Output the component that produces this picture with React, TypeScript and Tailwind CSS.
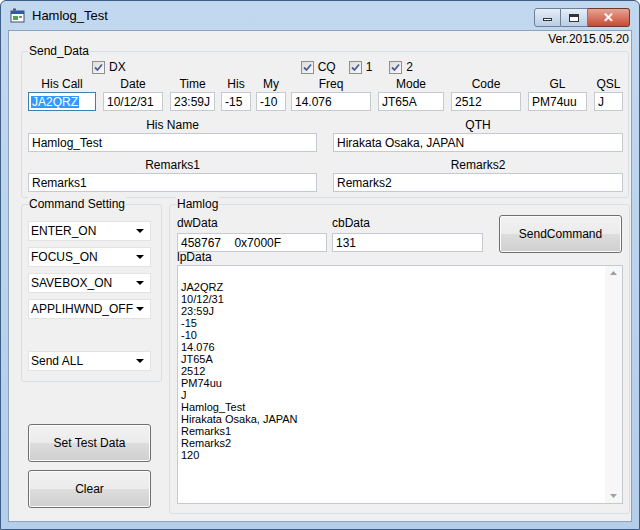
import React from "react";

const F = { fontFamily: '"Liberation Sans", Arial, sans-serif' };

function Box({ w, text, sel, cls = "" }: { w: number; text: string; sel?: boolean; cls?: string }) {
  return (
    <div
      className={`h-[19px] bg-white border flex items-center pl-[3px] text-[12px] leading-none text-black whitespace-pre overflow-hidden ${sel ? "border-[#3c7fb1]" : "border-[#c5c9d0]"} ${cls}`}
      style={{ width: w }}
    >
      {sel ? <span className="bg-[#3399ff] text-white px-[1px] -ml-[1px]">{text}</span> : text}
    </div>
  );
}

function Col({ w, label, text, ml, sel }: { w: number; label: string; text: string; ml: number; sel?: boolean }) {
  return (
    <div className="flex flex-col items-center" style={{ width: w, marginLeft: ml }}>
      <div className="h-[15px] text-[12px] leading-[15px] whitespace-nowrap">{label}</div>
      <Box w={w} text={text} sel={sel} />
    </div>
  );
}

function Check({ label }: { label: string }) {
  return (
    <div className="flex items-center gap-[4px] text-[12px]">
      <div className="w-[13px] h-[13px] border border-[#8f8f8f] bg-gradient-to-br from-[#dcdcdc] to-[#fafafa] flex items-center justify-center">
        <svg width="9" height="9" viewBox="0 0 9 9"><path d="M1 4.5 L3.5 7 L8 1.5" stroke="#4a5f97" strokeWidth="1.8" fill="none" /></svg>
      </div>
      <span>{label}</span>
    </div>
  );
}

function Combo({ text, cls = "" }: { text: string; cls?: string }) {
  return (
    <div className={`w-[123px] h-[20px] bg-white border border-[#e3e3e3] flex items-center justify-between pl-[2px] pr-[6px] text-[12px] ${cls}`}>
      <span className="whitespace-nowrap">{text}</span>
      <svg width="8" height="4" viewBox="0 0 8 4"><path d="M0 0 L8 0 L4 4 Z" fill="#000" /></svg>
    </div>
  );
}

function Btn({ text, w, h, cls = "" }: { text: string; w: number; h: number; cls?: string }) {
  return (
    <div
      className={`rounded-[3px] border border-[#707070] flex items-center justify-center text-[12px] bg-[linear-gradient(#f2f2f2_0%,#ebebeb_50%,#dddddd_51%,#cfcfcf_100%)] shadow-[inset_0_0_0_1px_#fcfcfc] ${cls}`}
      style={{ width: w, height: h }}
    >
      {text}
    </div>
  );
}

function Group({ label, cls, children }: { label: string; cls: string; children?: React.ReactNode }) {
  return (
    <div className={`relative border border-[#d5dfe5] rounded-[3px] ${cls}`}>
      <div className="absolute -top-[8px] left-[6px] bg-[#f0f0f0] px-[1px] text-[12px] leading-[14px]">{label}</div>
      {children}
    </div>
  );
}

const lp = ["JA2QRZ", "10/12/31", "23:59J", "-15", "-10", "14.076", "JT65A", "2512", "PM74uu", "J", "Hamlog_Test", "Hirakata Osaka, JAPAN", "Remarks1", "Remarks2", "120"];

export default function App() {
  return (
    <div className="w-[640px] h-[530px] bg-[linear-gradient(#c2d8ef,#b4cde9)] border border-[#3f5e85] rounded-t-[6px] flex flex-col text-black" style={F}>
      <div className="h-[29px] flex items-center pl-[9px] pr-[9px]">
        <svg width="16" height="16" viewBox="0 0 16 16">
          <rect x="1" y="3" width="13" height="11" fill="#fff" stroke="#3a4f6a" />
          <rect x="1" y="3" width="13" height="3" fill="#2b5ba8" />
          <rect x="3" y="8" width="5" height="4" fill="#4da84a" />
          <rect x="9" y="8" width="3" height="2" fill="#888" />
          <rect x="3" y="0.5" width="3" height="2" fill="#555" />
        </svg>
        <span className="ml-[6px] text-[13px]">Hamlog_Test</span>
        <div className="ml-auto flex items-start self-start mt-[7px]">
          <div className="w-[27px] h-[19px] border border-[#6d7f96] rounded-l-[3px] bg-[linear-gradient(#e6eef8,#b9cde5)] flex items-end justify-center pb-[5px]"><div className="w-[9px] h-[3px] bg-white border border-[#333]" /></div>
          <div className="w-[27px] h-[19px] border border-l-0 border-[#6d7f96] bg-[linear-gradient(#e6eef8,#b9cde5)] flex items-center justify-center"><div className="w-[10px] h-[8px] border border-[#333] bg-white shadow-[inset_0_2px_0_#333]" /></div>
          <div className="w-[42px] h-[19px] border border-l-0 border-[#6d3a30] rounded-r-[3px] bg-[linear-gradient(#e8a493,#c74a32)] flex items-center justify-center text-white font-bold text-[13px]">✕</div>
        </div>
      </div>
      <div className="ml-[7px] w-[624px] h-[492px] bg-[#f0f0f0] border border-[#8da2be] text-[12px]">
        <div className="text-right pr-[2px] pt-[1px] h-[20px] leading-[14px]">Ver.2015.05.20</div>
        <Group label="Send_Data" cls="ml-[12px] w-[608px] h-[147px]">
          <div className="flex items-center h-[16px] mt-[7px]">
            <div className="ml-[70px]"><Check label="DX" /></div>
            <div className="ml-[175px]"><Check label="CQ" /></div>
            <div className="ml-[13px]"><Check label="1" /></div>
            <div className="ml-[17px]"><Check label="2" /></div>
          </div>
          <div className="flex mt-[2px]">
            <Col ml={6} w={68} label="His Call" text="JA2QRZ" sel />
            <Col ml={7} w={60} label="Date" text="10/12/31" />
            <Col ml={7} w={45} label="Time" text="23:59J" />
            <Col ml={6} w={30} label="His" text="-15" />
            <Col ml={5} w={30} label="My" text="-10" />
            <Col ml={5} w={80} label="Freq" text="14.076" />
            <Col ml={7} w={66} label="Mode" text="JT65A" />
            <Col ml={7} w={70} label="Code" text="2512" />
            <Col ml={7} w={59} label="GL" text="PM74uu" />
            <Col ml={7} w={29} label="QSL" text="J" />
          </div>
          <div className="flex mt-[7px]">
            <Col ml={6} w={289} label="His Name" text="Hamlog_Test" />
            <Col ml={16} w={290} label="QTH" text="Hirakata Osaka, JAPAN" />
          </div>
          <div className="flex mt-[6px]">
            <Col ml={6} w={289} label="Remarks1" text="Remarks1" />
            <Col ml={16} w={290} label="Remarks2" text="Remarks2" />
          </div>
        </Group>
        <div className="flex mt-[6px]">
          <div className="ml-[12px] flex flex-col">
            <Group label="Command Setting" cls="w-[141px] h-[178px] pt-[16px] pl-[6px]">
              <div className="flex flex-col gap-[6px]">
                <Combo text="ENTER_ON" />
                <Combo text="FOCUS_ON" />
                <Combo text="SAVEBOX_ON" />
                <Combo text="APPLIHWND_OFF" />
              </div>
              <Combo text="Send ALL" cls="mt-[32px]" />
            </Group>
            <Btn text="Set Test Data" w={123} h={38} cls="ml-[7px] mt-[42px]" />
            <Btn text="Clear" w={123} h={38} cls="ml-[7px] mt-[8px]" />
          </div>
          <Group label="Hamlog" cls="ml-[7px] w-[461px] h-[310px] pl-[7px]">
            <div className="flex mt-[11px]">
              <div className="flex flex-col">
                <div className="h-[17px] leading-[15px]">dwData</div>
                <Box w={150} text="458767    0x7000F" />
              </div>
              <div className="flex flex-col ml-[5px]">
                <div className="h-[17px] leading-[15px]">cbData</div>
                <Box w={151} text="131" />
              </div>
              <Btn text="SendCommand" w={123} h={38} cls="ml-[16px] -mt-[1px]" />
            </div>
            <div className="h-[16px] leading-[16px] -mt-[4px]">lpData</div>
            <div className="w-[446px] h-[239px] bg-white border border-[#c5c9d0] flex">
              <div className="flex-1 pl-[3px] pt-[15px] text-[11px] leading-[12px]">
                {lp.map((l, i) => (<div key={i} className="h-[12px] whitespace-nowrap">{l}</div>))}
              </div>
              <div className="w-[17px] flex flex-col justify-between items-center py-[5px] bg-[#f7f7f7]">
                <svg width="7" height="4" viewBox="0 0 7 4"><path d="M0 4 L7 4 L3.5 0 Z" fill="#a0a0a0" /></svg>
                <svg width="7" height="4" viewBox="0 0 7 4"><path d="M0 0 L7 0 L3.5 4 Z" fill="#a0a0a0" /></svg>
              </div>
            </div>
          </Group>
        </div>
      </div>
    </div>
  );
}
